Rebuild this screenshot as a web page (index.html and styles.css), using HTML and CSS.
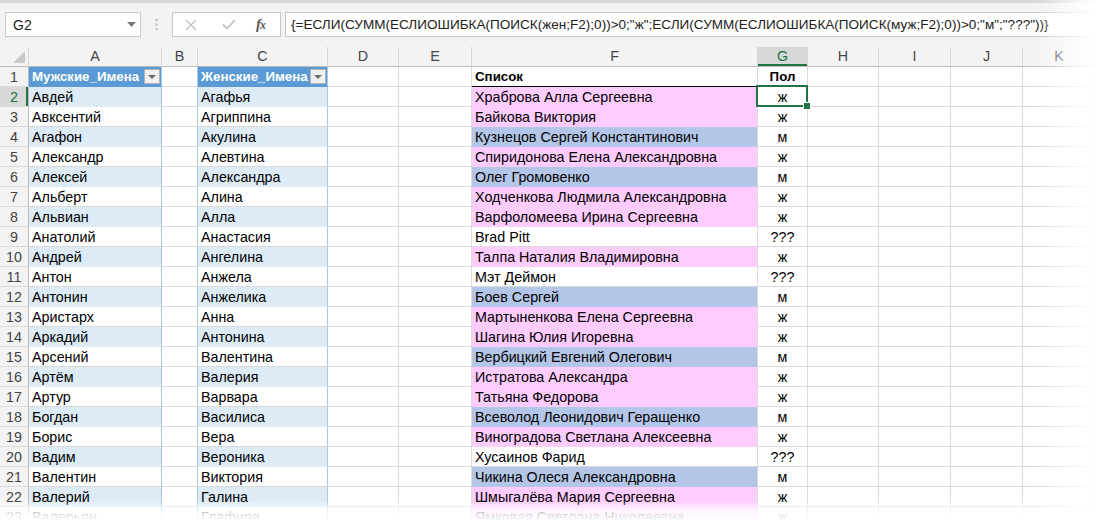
FILE: index.html
```html
<!DOCTYPE html>
<html lang="ru">
<head>
<meta charset="utf-8">
<title>Excel</title>
<link rel="stylesheet" href="styles.css">
</head>
<body>
<div class="app">
  <div class="top">
    <div class="fbar">
      <div class="namebox">
        <span class="ref">G2</span>
        <svg class="dd" width="9" height="5" viewBox="0 0 9 5"><path d="M0 0h9L4.5 5z" fill="#7a7a7a"/></svg>
      </div>
      <div class="grip">
        <svg width="3" height="11" viewBox="0 0 3 11"><rect x="0.5" y="0" width="2" height="2" fill="#b8b8b8"/><rect x="0.5" y="4.5" width="2" height="2" fill="#b8b8b8"/><rect x="0.5" y="9" width="2" height="2" fill="#b8b8b8"/></svg>
      </div>
      <div class="fbtns">
        <svg class="ico" width="12" height="12" viewBox="0 0 12 12"><path d="M1 1l10 10M11 1L1 11" stroke="#c2c2c2" stroke-width="1.4" fill="none"/></svg>
        <svg class="ico" width="14" height="11" viewBox="0 0 14 11"><path d="M1 5.5l4 4L13 1" stroke="#c2c2c2" stroke-width="1.8" fill="none"/></svg>
        <span class="fx">f<span class="x">x</span></span>
      </div>
      <div class="formula">{=ЕСЛИ(СУММ(ЕСЛИОШИБКА(ПОИСК(жен;F2);0))&gt;0;"ж";ЕСЛИ(СУММ(ЕСЛИОШИБКА(ПОИСК(муж;F2);0))&gt;0;"м";"???"))}</div>
    </div>
  </div>
  <div class="sheet">
    <div class="r"><div class="c h corner"></div><div class="c h">A</div><div class="c h">B</div><div class="c h">C</div><div class="c h">D</div><div class="c h">E</div><div class="c h">F</div><div class="c h hsel">G</div><div class="c h">H</div><div class="c h">I</div><div class="c h">J</div><div class="c h">K</div></div>
    <div class="r"><div class="c n">1</div><div class="c t th">Мужские_Имена<span class="flt"></span></div><div class="c sep"></div><div class="c t th">Женские_Имена<span class="flt"></span></div><div class="c"></div><div class="c"></div><div class="c hd">Список</div><div class="c g hd">Пол</div><div class="c"></div><div class="c"></div><div class="c"></div><div class="c"></div></div>
    <div class="r"><div class="c n nsel">2</div><div class="c t b">Авдей</div><div class="c sep"></div><div class="c t b">Агафья</div><div class="c"></div><div class="c"></div><div class="c pk">Храброва Алла Сергеевна</div><div class="c g cur">ж</div><div class="c"></div><div class="c"></div><div class="c"></div><div class="c"></div></div>
    <div class="r"><div class="c n">3</div><div class="c t">Авксентий</div><div class="c sep"></div><div class="c t">Агриппина</div><div class="c"></div><div class="c"></div><div class="c pk">Байкова Виктория</div><div class="c g">ж</div><div class="c"></div><div class="c"></div><div class="c"></div><div class="c"></div></div>
    <div class="r"><div class="c n">4</div><div class="c t b">Агафон</div><div class="c sep"></div><div class="c t b">Акулина</div><div class="c"></div><div class="c"></div><div class="c bl">Кузнецов Сергей Константинович</div><div class="c g">м</div><div class="c"></div><div class="c"></div><div class="c"></div><div class="c"></div></div>
    <div class="r"><div class="c n">5</div><div class="c t">Александр</div><div class="c sep"></div><div class="c t">Алевтина</div><div class="c"></div><div class="c"></div><div class="c pk">Спиридонова Елена Александровна</div><div class="c g">ж</div><div class="c"></div><div class="c"></div><div class="c"></div><div class="c"></div></div>
    <div class="r"><div class="c n">6</div><div class="c t b">Алексей</div><div class="c sep"></div><div class="c t b">Александра</div><div class="c"></div><div class="c"></div><div class="c bl">Олег Громовенко</div><div class="c g">м</div><div class="c"></div><div class="c"></div><div class="c"></div><div class="c"></div></div>
    <div class="r"><div class="c n">7</div><div class="c t">Альберт</div><div class="c sep"></div><div class="c t">Алина</div><div class="c"></div><div class="c"></div><div class="c pk">Ходченкова Людмила Александровна</div><div class="c g">ж</div><div class="c"></div><div class="c"></div><div class="c"></div><div class="c"></div></div>
    <div class="r"><div class="c n">8</div><div class="c t b">Альвиан</div><div class="c sep"></div><div class="c t b">Алла</div><div class="c"></div><div class="c"></div><div class="c pk">Варфоломеева Ирина Сергеевна</div><div class="c g">ж</div><div class="c"></div><div class="c"></div><div class="c"></div><div class="c"></div></div>
    <div class="r"><div class="c n">9</div><div class="c t">Анатолий</div><div class="c sep"></div><div class="c t">Анастасия</div><div class="c"></div><div class="c"></div><div class="c">Brad Pitt</div><div class="c g">???</div><div class="c"></div><div class="c"></div><div class="c"></div><div class="c"></div></div>
    <div class="r"><div class="c n">10</div><div class="c t b">Андрей</div><div class="c sep"></div><div class="c t b">Ангелина</div><div class="c"></div><div class="c"></div><div class="c pk">Талпа Наталия Владимировна</div><div class="c g">ж</div><div class="c"></div><div class="c"></div><div class="c"></div><div class="c"></div></div>
    <div class="r"><div class="c n">11</div><div class="c t">Антон</div><div class="c sep"></div><div class="c t">Анжела</div><div class="c"></div><div class="c"></div><div class="c">Мэт Деймон</div><div class="c g">???</div><div class="c"></div><div class="c"></div><div class="c"></div><div class="c"></div></div>
    <div class="r"><div class="c n">12</div><div class="c t b">Антонин</div><div class="c sep"></div><div class="c t b">Анжелика</div><div class="c"></div><div class="c"></div><div class="c bl">Боев Сергей</div><div class="c g">м</div><div class="c"></div><div class="c"></div><div class="c"></div><div class="c"></div></div>
    <div class="r"><div class="c n">13</div><div class="c t">Аристарх</div><div class="c sep"></div><div class="c t">Анна</div><div class="c"></div><div class="c"></div><div class="c pk">Мартыненкова Елена Сергеевна</div><div class="c g">ж</div><div class="c"></div><div class="c"></div><div class="c"></div><div class="c"></div></div>
    <div class="r"><div class="c n">14</div><div class="c t b">Аркадий</div><div class="c sep"></div><div class="c t b">Антонина</div><div class="c"></div><div class="c"></div><div class="c pk">Шагина Юлия Игоревна</div><div class="c g">ж</div><div class="c"></div><div class="c"></div><div class="c"></div><div class="c"></div></div>
    <div class="r"><div class="c n">15</div><div class="c t">Арсений</div><div class="c sep"></div><div class="c t">Валентина</div><div class="c"></div><div class="c"></div><div class="c bl">Вербицкий Евгений Олегович</div><div class="c g">м</div><div class="c"></div><div class="c"></div><div class="c"></div><div class="c"></div></div>
    <div class="r"><div class="c n">16</div><div class="c t b">Артём</div><div class="c sep"></div><div class="c t b">Валерия</div><div class="c"></div><div class="c"></div><div class="c pk">Истратова Александра</div><div class="c g">ж</div><div class="c"></div><div class="c"></div><div class="c"></div><div class="c"></div></div>
    <div class="r"><div class="c n">17</div><div class="c t">Артур</div><div class="c sep"></div><div class="c t">Варвара</div><div class="c"></div><div class="c"></div><div class="c pk">Татьяна Федорова</div><div class="c g">ж</div><div class="c"></div><div class="c"></div><div class="c"></div><div class="c"></div></div>
    <div class="r"><div class="c n">18</div><div class="c t b">Богдан</div><div class="c sep"></div><div class="c t b">Василиса</div><div class="c"></div><div class="c"></div><div class="c bl">Всеволод Леонидович Геращенко</div><div class="c g">м</div><div class="c"></div><div class="c"></div><div class="c"></div><div class="c"></div></div>
    <div class="r"><div class="c n">19</div><div class="c t">Борис</div><div class="c sep"></div><div class="c t">Вера</div><div class="c"></div><div class="c"></div><div class="c pk">Виноградова Светлана Алексеевна</div><div class="c g">ж</div><div class="c"></div><div class="c"></div><div class="c"></div><div class="c"></div></div>
    <div class="r"><div class="c n">20</div><div class="c t b">Вадим</div><div class="c sep"></div><div class="c t b">Вероника</div><div class="c"></div><div class="c"></div><div class="c">Хусаинов Фарид</div><div class="c g">???</div><div class="c"></div><div class="c"></div><div class="c"></div><div class="c"></div></div>
    <div class="r"><div class="c n">21</div><div class="c t">Валентин</div><div class="c sep"></div><div class="c t">Виктория</div><div class="c"></div><div class="c"></div><div class="c bl">Чикина Олеся Александровна</div><div class="c g">м</div><div class="c"></div><div class="c"></div><div class="c"></div><div class="c"></div></div>
    <div class="r"><div class="c n">22</div><div class="c t b">Валерий</div><div class="c sep"></div><div class="c t b">Галина</div><div class="c"></div><div class="c"></div><div class="c pk">Шмыгалёва Мария Сергеевна</div><div class="c g">ж</div><div class="c"></div><div class="c"></div><div class="c"></div><div class="c"></div></div>
    <div class="r"><div class="c n">23</div><div class="c t">Валерьян</div><div class="c sep"></div><div class="c t">Глафира</div><div class="c"></div><div class="c"></div><div class="c pk">Ямковая Светлана Николаевна</div><div class="c g">ж</div><div class="c"></div><div class="c"></div><div class="c"></div><div class="c"></div></div>
  </div>
  <div class="fade-right"></div>
  <div class="fade-bottom"></div>
</div>
</body>
</html>
```
FILE: styles.css
```css
* { box-sizing: border-box; }
html, body { margin: 0; padding: 0; background: #fff; }
.app {
  position: relative;
  width: 1096px;
  height: 521px;
  overflow: hidden;
  font-family: "Liberation Sans", Arial, sans-serif;
}
.top {
  height: 47px;
  background: #f2f2f2;
  border-top: 3px solid #d8d8d8;
  padding-top: 9px;
}
.fbar {
  display: flex;
  align-items: stretch;
  height: 25px;
  padding-left: 5px;
}
.namebox {
  width: 136px;
  background: #fff;
  border: 1px solid #c8c8c8;
  display: flex;
  align-items: center;
  justify-content: space-between;
  padding: 0 4px 0 7px;
  font-size: 14px;
  color: #222;
}
.grip {
  width: 31px;
  display: flex;
  align-items: center;
  justify-content: center;
}
.fbtns {
  width: 109px;
  background: #fff;
  border: 1px solid #c8c8c8;
  display: flex;
  align-items: center;
  padding-left: 12px;
}
.fbtns .ico:first-child { margin-right: 25px; }
.fbtns .ico:nth-child(2) { margin-right: 20px; }
.fx {
  font-family: "Liberation Serif", serif;
  font-style: italic;
  font-weight: bold;
  font-size: 15px;
  color: #5a5a5a;
  letter-spacing: -1px;
}
.fx .x { font-size: 12px; }
.formula {
  flex: 1;
  margin-left: 4px;
  background: #fff;
  border: 1px solid #c8c8c8;
  border-right: none;
  padding-left: 5px;
  font-size: 13.55px;
  line-height: 23px;
  color: #222;
  white-space: nowrap;
  overflow: hidden;
}
.sheet {
  display: grid;
  grid-template-columns: 29px 133px 36px 130px 71px 73px 286px 50px 71px 72px 72px 73px;
  grid-auto-rows: 20px;
}
.r { display: contents; }
.c {
  border-right: 1px solid #dadada;
  border-bottom: 1px solid #dadada;
  padding: 0 3px;
  font-size: 14.3px;
  line-height: 20px;
  color: #000;
  white-space: nowrap;
  overflow: hidden;
}
.h {
  background: #f3f3f3;
  border-right-color: #d5d5d5;
  border-bottom-color: #bcbcbc;
  text-align: center;
  color: #444;
  line-height: 19px;
}
.corner { position: relative; }
.corner::after {
  content: "";
  position: absolute;
  right: 3px;
  bottom: 3px;
  border-style: solid;
  border-width: 0 0 12px 12px;
  border-color: transparent transparent #c9c9c9 transparent;
}
.hsel {
  background: #d8d8d8;
  color: #217346;
  box-shadow: inset 0 -2px 0 #217346;
}
.n {
  background: #f3f3f3;
  border-right-color: #bcbcbc;
  border-bottom-color: #dadada;
  text-align: center;
  color: #444;
}
.nsel {
  background: #d8d8d8;
  color: #217346;
  box-shadow: inset -2px 0 0 #217346;
}
.t { border-right-color: #a8c8e8; }
.sep { border-right-color: #a8c8e8; }
.b { background: #ddebf7; border-bottom-color: #ddebf7; }
.th {
  background: #5b9bd5;
  border-bottom-color: #5b9bd5;
  color: #fff;
  font-weight: bold;
  font-size: 13.3px;
  position: relative;
}
.flt {
  position: absolute;
  right: 1px;
  top: 2px;
  width: 16px;
  height: 15px;
  background: #f0f0f0;
  border: 1px solid #b5b5b5;
}
.flt::after {
  content: "";
  position: absolute;
  left: 3px;
  top: 5px;
  border-style: solid;
  border-width: 4px 4px 0 4px;
  border-color: #6d6d6d transparent transparent transparent;
}
.hd { font-weight: bold; font-size: 13.3px; border-bottom-color: #000; }
.g { text-align: center; }
.pk { background: #ffccff; border-bottom-color: #ffccff; }
.bl { background: #b4c6e7; border-bottom-color: #b4c6e7; }
.cur { position: relative; overflow: visible; }
.cur::after {
  content: "";
  position: absolute;
  left: -2px;
  top: -2px;
  right: -1px;
  bottom: -1px;
  border: 2px solid #217346;
}
.cur::before {
  content: "";
  position: absolute;
  right: -4px;
  bottom: -4px;
  width: 6px;
  height: 6px;
  background: #217346;
  border: 1px solid #fff;
  z-index: 1;
}
.fade-right {
  position: absolute;
  top: 0;
  right: 0;
  width: 60px;
  height: 100%;
  background: linear-gradient(to right, rgba(255,255,255,0) 0, rgba(255,255,255,0.75) 40px, rgba(255,255,255,0.95) 60px);
}
.fade-bottom {
  position: absolute;
  left: 0;
  bottom: 0;
  width: 100%;
  height: 20px;
  background: linear-gradient(to bottom, rgba(255,255,255,0) 0, rgba(255,255,255,0.7) 8px, #fff 20px);
}
```
